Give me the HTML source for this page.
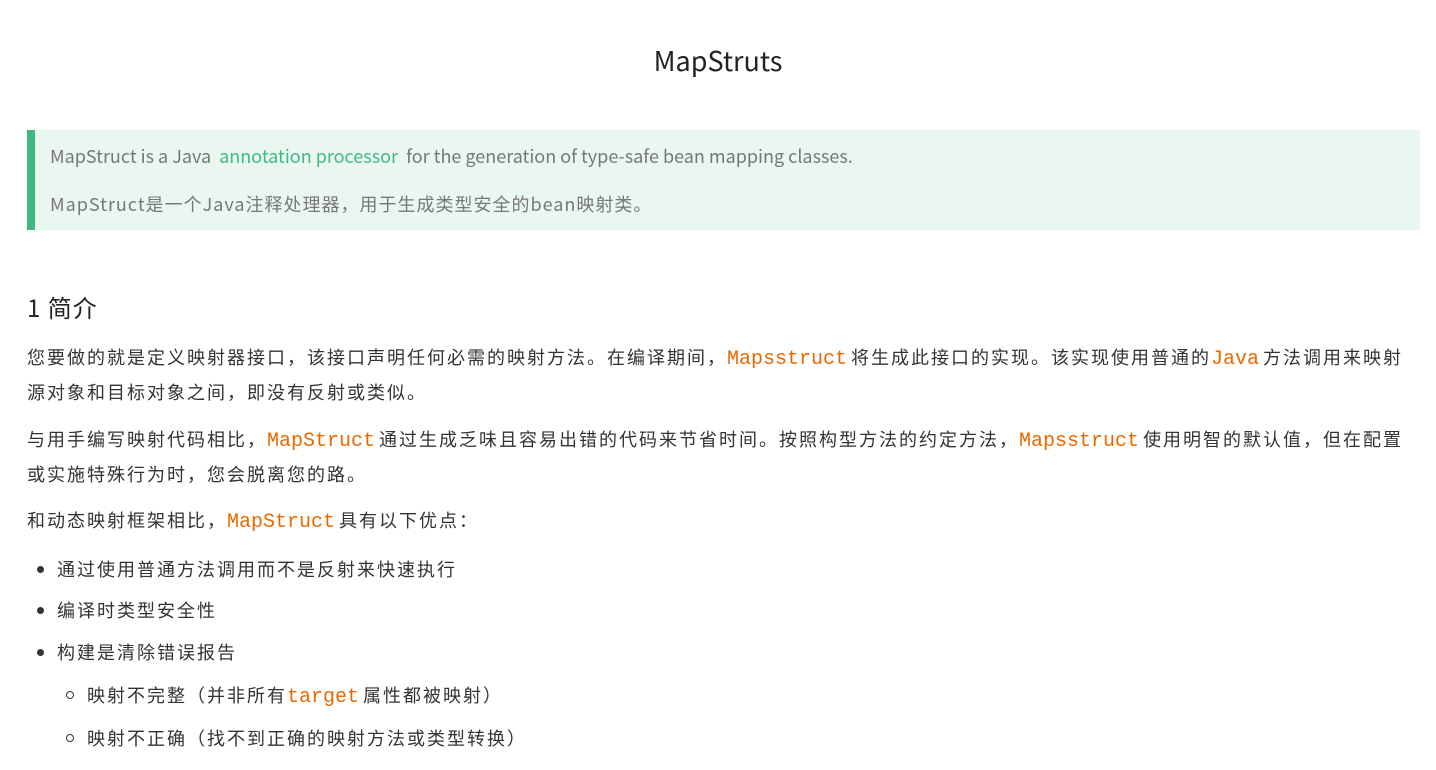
<!DOCTYPE html>
<html><head><meta charset="utf-8"><style>
body{margin:0;background:#fff;font-family:"Noto Sans CJK SC",sans-serif;color:#333;}
h1{position:absolute;top:40px;left:0;width:1436px;text-align:center;margin:0;font-weight:400;font-size:27px;line-height:40px;color:#222;}
.bq{position:absolute;top:130px;left:27px;width:1385px;height:100px;background:#eaf7f1;border-left:8px solid #42b983;}
.bq p{position:absolute;left:15px;margin:0;font-size:18px;color:#777;line-height:24px;white-space:nowrap}
.bq a{color:#42b983;text-decoration:none}
h2{position:absolute;top:289px;left:27px;margin:0;font-weight:400;font-size:24px;line-height:36px;color:#222;letter-spacing:1px}
.p{position:absolute;left:27px;width:1420px;margin:0;font-size:18px;line-height:32px;color:#333;letter-spacing:2px;white-space:nowrap}
code{font-family:"Liberation Mono",monospace;color:#e96900;font-size:20px;margin:0 4px 0 0;letter-spacing:0}
.li{position:absolute;font-size:18px;line-height:32px;white-space:nowrap;color:#333;letter-spacing:2px}
.dot{position:absolute;width:7px;height:7px;border-radius:50%;background:#333}
.ring{position:absolute;width:6px;height:6px;border-radius:50%;border:1.3px solid #333}
</style></head><body>
<h1>MapStruts</h1>
<div class="bq">
<p style="top:14px">MapStruct is a Java &nbsp;<a>annotation processor</a>&nbsp; for the generation of type-safe bean mapping classes.</p>
<p style="top:62px;letter-spacing:1px">MapStruct是一个Java注释处理器，用于生成类型安全的bean映射类。</p>
</div>
<h2>1 简介</h2>
<p class="p" style="top:341px">您要做的就是定义映射器接口，该接口声明任何必需的映射方法。在编译期间，<code>Mapsstruct</code>将生成此接口的实现。该实现使用普通的<code>Java</code>方法调用来映射<br>源对象和目标对象之间，即没有反射或类似。</p>
<p class="p" style="top:423px">与用手编写映射代码相比，<code>MapStruct</code>通过生成乏味且容易出错的代码来节省时间。按照构型方法的约定方法，<code>Mapsstruct</code>使用明智的默认值，但在配置<br>或实施特殊行为时，您会脱离您的路。</p>
<p class="p" style="top:504px">和动态映射框架相比，<code>MapStruct</code>具有以下优点：</p>
<div class="dot" style="left:37px;top:566px"></div><div class="li" style="left:57px;top:553px">通过使用普通方法调用而不是反射来快速执行</div>
<div class="dot" style="left:37px;top:607px"></div><div class="li" style="left:57px;top:594px">编译时类型安全性</div>
<div class="dot" style="left:37px;top:649px"></div><div class="li" style="left:57px;top:636px">构建是清除错误报告</div>
<div class="ring" style="left:66px;top:691px"></div><div class="li" style="left:87px;top:679px">映射不完整（并非所有<code>target</code>属性都被映射）</div>
<div class="ring" style="left:66px;top:734px"></div><div class="li" style="left:87px;top:722px">映射不正确（找不到正确的映射方法或类型转换）</div>
</body></html>
